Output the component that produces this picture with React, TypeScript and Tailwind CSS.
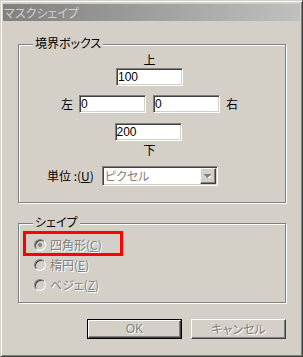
import React from "react";

const sunken =
  "bg-white border border-t-[#808080] border-l-[#808080] border-r-white border-b-white shadow-[inset_1px_1px_0_#404040,inset_-1px_-1px_0_#d4d0c8]";
const raised =
  "bg-[#d4d0c8] border border-t-white border-l-white border-r-[#404040] border-b-[#404040] shadow-[inset_-1px_-1px_0_#808080]";
const frame =
  "relative border border-[#808080] shadow-[1px_1px_0_#fff,inset_1px_1px_0_#fff]";
const disabledText = "text-[#808080] [text-shadow:1px_1px_0_#fff]";

function Field({ value, w = "w-[67px]" }: { value: string; w?: string }) {
  return (
    <div className={`${sunken} ${w} h-[18px] pl-[1px] flex items-center text-[12px] leading-[14px] font-['Liberation_Sans',sans-serif] text-black`}>
      {value}
    </div>
  );
}

function Radio({ checked, label, k }: { checked?: boolean; label: string; k: string }) {
  return (
    <div className="h-[20px] flex items-center pl-[15px]">
      <div className="w-[12px] h-[12px] rounded-full border border-t-[#808080] border-l-[#808080] border-r-white border-b-white bg-[#d4d0c8] flex items-center justify-center shadow-[inset_1px_1px_0_#404040]">
        {checked && <div className="w-[4px] h-[4px] rounded-full bg-[#808080]" />}
      </div>
      <span className={`ml-[4px] text-[12px] leading-[14px] ${disabledText}`}>
        {label}(<span className="underline">{k}</span>)
      </span>
    </div>
  );
}

export default function App() {
  return (
    <div className="w-[303px] h-[357px] bg-[#d4d0c8] font-['Noto_Sans_CJK_JP','Liberation_Sans',sans-serif] [font-feature-settings:'palt'] border border-t-[#d4d0c8] border-l-[#d4d0c8] border-r-[#404040] border-b-[#404040] shadow-[inset_1px_1px_0_#fff,inset_-1px_-1px_0_#808080] pt-[3px] px-[2px] flex flex-col">
      {/* Title bar */}
      <div className="h-[17px] bg-gradient-to-r from-[#808080] to-[#c0c0c0] flex items-center pl-[1px]">
        <span className="text-[12px] leading-[14px] text-[#d4d0c8]">マスクシェイプ</span>
      </div>

      <div className="px-[15px] flex flex-col">
        {/* Group 1 */}
        <div className={`${frame} mt-[23px] w-[268px] h-[159px]`}>
          <span className="absolute left-[14px] top-[-9px] px-[2px] bg-[#d4d0c8] text-[12px] leading-[14px] text-black">
            境界ボックス
          </span>
          <div className="flex flex-col items-center pr-[5px] pt-[8px] text-[12px] leading-[14px] text-black">
            <div className="h-[14px]">上</div>
            <div className="mt-[1px]">
              <Field value="100" />
            </div>
            <div className="mt-[9px] flex items-center">
              <span className="w-[12px]">左</span>
              <div className="ml-[6px]">
                <Field value="0" />
              </div>
              <div className="ml-[7px]">
                <Field value="0" />
              </div>
              <span className="ml-[6px] w-[12px]">右</span>
            </div>
            <div className="mt-[10px] pr-[3px]">
              <Field value="200" />
            </div>
            <div className="h-[14px] mt-[2px]">下</div>
          </div>
          <div className="mt-[9px] pl-[28px] flex items-center text-[12px] leading-[14px] text-black">
            <span>
              単位 :(<span className="underline">U</span>)
            </span>
            <div className={`${sunken} ml-[8px] w-[116px] h-[20px] flex items-center justify-between pl-[2px] pr-[1px]`}>
              <span className={`text-[12px] leading-[14px] ${disabledText}`}>ピクセル</span>
              <div className={`${raised} w-[16px] h-[16px] flex items-center justify-center`}>
                <svg width="7" height="4" viewBox="0 0 7 4">
                  <path d="M1 1h5v1H1zM2 2h3v1H2zM3 3h1v1H3z" fill="#fff" transform="translate(1 1)" />
                  <path d="M0 0h7v1H0zM1 1h5v1H1zM2 2h3v1H2zM3 3h1v1H3z" fill="#808080" />
                </svg>
              </div>
            </div>
          </div>
        </div>

        {/* Group 2 */}
        <div className={`${frame} mt-[20px] w-[268px] h-[80px]`}>
          <span className="absolute left-[14px] top-[-9px] px-[2px] bg-[#d4d0c8] text-[12px] leading-[14px] text-black">
            シェイプ
          </span>
          <div className="pt-[11px] flex flex-col">
            <Radio checked label="四角形" k="C" />
            <Radio label="楕円" k="E" />
            <Radio label="ベジェ" k="Z" />
          </div>
          <div className="absolute left-[4px] top-[7px] w-[100px] h-[25px] border-[3px] border-[#ff0000]" />
        </div>

        {/* Buttons */}
        <div className="mt-[16px] flex justify-end gap-[9px] w-[268px]">
          <div className="w-[95px] h-[20px] border border-black">
            <div className={`${raised} w-full h-full flex items-center justify-center text-[12px] leading-[14px] font-['Liberation_Sans',sans-serif] ${disabledText}`}>
              OK
            </div>
          </div>
          <div className={`${raised} w-[95px] h-[20px] flex items-center justify-center text-[12px] leading-[14px] ${disabledText}`}>
            キャンセル
          </div>
        </div>
      </div>
    </div>
  );
}
